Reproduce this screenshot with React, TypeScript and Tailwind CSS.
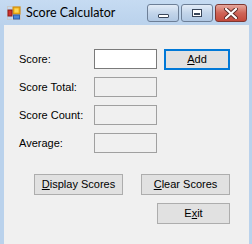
import React from 'react';

const ui = { fontFamily: '"Liberation Sans", Arial, sans-serif' };

function AppIcon() {
  return (
    <svg width="14" height="14" viewBox="0 0 14 14" className="shrink-0">
      <rect x="0.5" y="0.5" width="13" height="13" fill="none" stroke="#c9c9c9" />
      <line x1="0" y1="7" x2="14" y2="7" stroke="#d8d8d8" />
      <line x1="6" y1="0" x2="6" y2="14" stroke="#d8d8d8" />
      <rect x="6" y="1" width="7" height="7" fill="#f3b318" stroke="#c98a10" />
      <rect x="7.5" y="2.5" width="4" height="4" fill="#fbd85a" />
      <rect x="1" y="4" width="4" height="6" fill="#d0312d" stroke="#8a1d1a" />
      <rect x="6.5" y="9" width="6" height="4" fill="#4a86d8" stroke="#2e5ea8" />
    </svg>
  );
}

function CaptionButton({ kind }: { kind: 'min' | 'max' | 'close' }) {
  const close = kind === 'close';
  return (
    <div
      className={`w-[32px] h-[18px] rounded-[3px] border flex items-center justify-center ${
        close
          ? 'border-[#7e3731] bg-gradient-to-b from-[#e5a79d] via-[#cf6457] to-[#c44a3c]'
          : 'border-[#6d7f97] bg-gradient-to-b from-[#e3ecf7] via-[#c3d5ea] to-[#b1c8e3]'
      }`}
    >
      {kind === 'min' && (
        <div className="mt-[5px] w-[11px] h-[4px] bg-white border border-[#39465a] rounded-[1px]" />
      )}
      {kind === 'max' && (
        <div className="w-[10px] h-[8px] bg-white border border-[#39465a] flex items-center justify-center">
          <div className="w-[6px] h-[2px] bg-[#39465a] mt-[1px]" />
        </div>
      )}
      {close && (
        <svg width="14" height="11" viewBox="0 0 14 11">
          <path d="M2 1 L12 10 M12 1 L2 10" stroke="#5a2a26" strokeWidth="4" strokeLinecap="round" />
          <path d="M2 1 L12 10 M12 1 L2 10" stroke="#ffffff" strokeWidth="2.2" strokeLinecap="round" />
        </svg>
      )}
    </div>
  );
}

function Btn({ pre, u, post, w, focused }: { pre?: string; u: string; post?: string; w: string; focused?: boolean }) {
  return (
    <div
      className={`${w} h-[21px] flex items-center justify-center bg-[#e1e1e1] text-[11px] text-black ${
        focused ? 'border-2 border-[#0078d7]' : 'border border-[#adadad]'
      }`}
      style={ui}
    >
      <span>
        {pre}
        <span className="underline underline-offset-1">{u}</span>
        {post}
      </span>
    </div>
  );
}

function Field({ label, editable }: { label: string; editable?: boolean }) {
  return (
    <>
      <div className="text-[11px] text-black h-[20px] flex items-center" style={ui}>
        {label}
      </div>
      <div
        className={`w-[63px] h-[20px] border ${
          editable ? 'bg-white border-[#7a7a7a]' : 'bg-[#f0f0f0] border-[#a0a0a0]'
        }`}
      />
    </>
  );
}

export default function App() {
  return (
    <div className="w-[252px] h-[244px] bg-[#bad2ec] flex flex-col overflow-hidden">
      <div className="h-[25px] flex items-start bg-gradient-to-b from-[#c6dbf2] to-[#bad2ec]">
        <div className="pl-[7px] pt-[6px]">
          <AppIcon />
        </div>
        <div
          className="pl-[5px] pt-[6px] text-[12.5px] text-black leading-[14px]"
          style={{ fontFamily: 'Lato, "Noto Sans", sans-serif' }}
        >
          Score Calculator
        </div>
        <div className="ml-auto mr-[5px] mt-[4px] flex gap-[2px]">
          <CaptionButton kind="min" />
          <CaptionButton kind="max" />
          <CaptionButton kind="close" />
        </div>
      </div>
      <div className="ml-[4px] mr-[3px] flex-1 bg-[#f0f0f0] pt-[24px] pl-[15px]">
        <div className="flex items-start">
          <div className="grid grid-cols-[75px_63px] gap-y-[8px]">
            <Field label="Score:" editable />
            <Field label="Score Total:" />
            <Field label="Score Count:" />
            <Field label="Average:" />
          </div>
          <div className="ml-[7px]">
            <Btn u="A" post="dd" w="w-[66px]" focused />
          </div>
        </div>
        <div className="mt-[21px] pl-[15px] flex gap-[18px]">
          <Btn u="D" post="isplay Scores" w="w-[89px]" />
          <Btn u="C" post="lear Scores" w="w-[89px]" />
        </div>
        <div className="mt-[8px] pl-[138px]">
          <Btn pre="E" u="x" post="it" w="w-[73px]" />
        </div>
      </div>
    </div>
  );
}
